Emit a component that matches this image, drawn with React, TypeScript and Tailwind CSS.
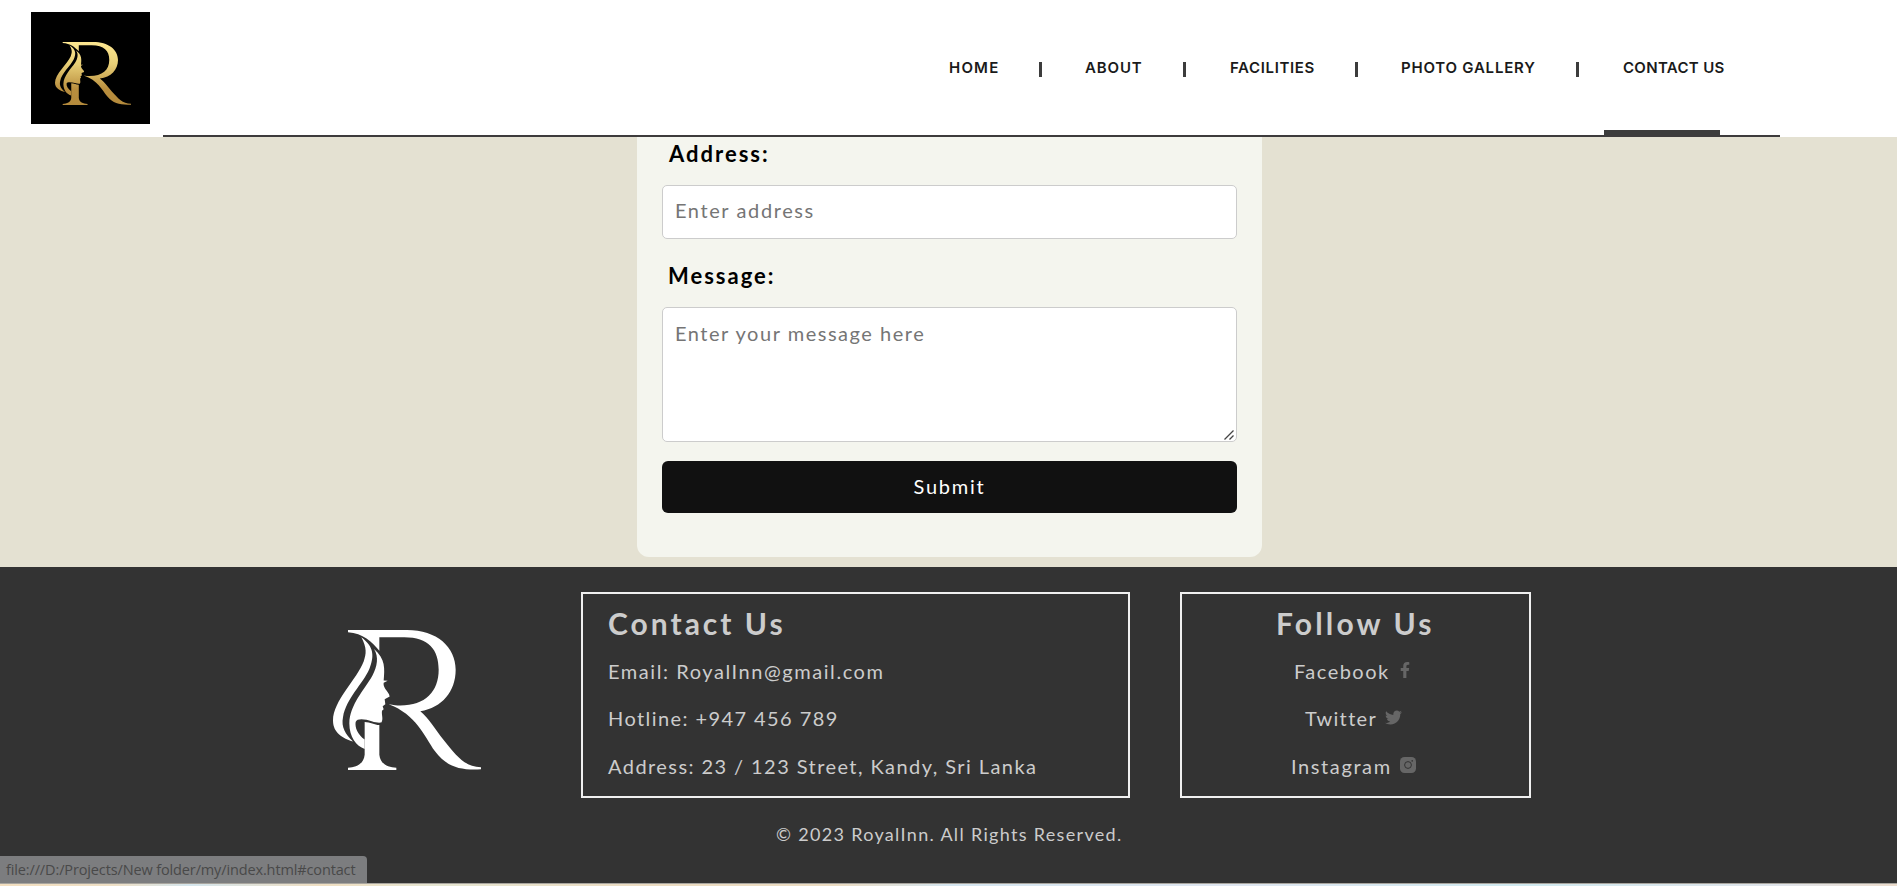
import { FaFacebookF, FaTwitter } from "react-icons/fa";

const MARK_PATHS = [
  "M143 121H320C410 121 466 172 466 240C466 305 425 354 360 364C385 384 402 415 430 450C468 497 492 530 542 532V538C480 541 440 532 404 484C372 438 348 374 265 343C280 345 290 347 300 347C375 347 415 305 415 240C415 180 385 143 312 143H237V183C215 158 188 130 143 128Z",
  "M193 396C210 396 222 405 237 405V494C240 522 262 532 288 533V540H143V533C168 532 190 522 193 494Z",
  "M183 143C200 175 198 192 190 215C170 268 98 332 98 392C98 430 128 445 158 455C135 432 122 412 128 382C138 325 186 285 207 238C222 200 222 172 183 143Z",
  "M221 178C236 202 231 230 216 258C192 300 148 345 147 400C147 442 168 468 193 477V449C172 434 163 412 166 396C170 384 196 388 214 394C226 398 234 399 243 398C250 388 243 376 245 363L250 358L247 349L255 343L253 328L268 320L266 313C258 300 248 292 250 279L262 273L250 272C253 238 256 207 221 178Z",
];

function Mark({ className, fill }: { className: string; fill: string }) {
  return (
    <svg className={className} viewBox="98 121 444 419" preserveAspectRatio="none" aria-hidden="true">
      <defs>
        <linearGradient id="gold" gradientUnits="userSpaceOnUse" x1="0" y1="121" x2="0" y2="540">
          <stop offset="0" stopColor="#fde791" />
          <stop offset="0.35" stopColor="#e8cf77" />
          <stop offset="0.75" stopColor="#b98e3e" />
          <stop offset="1" stopColor="#b48a3c" />
        </linearGradient>
      </defs>
      {MARK_PATHS.map((d) => (
        <path key={d} d={d} fill={fill} />
      ))}
    </svg>
  );
}

function InstagramSolid() {
  return (
    <svg className="size-4" viewBox="0 0 16 16" aria-hidden="true">
      <rect width="16" height="16" rx="4.5" fill="#666" />
      <circle cx="8" cy="8" r="3.4" fill="none" stroke="#333" strokeWidth="1" />
      <circle cx="12.2" cy="3.9" r="0.8" fill="#333" />
    </svg>
  );
}

const navItems = [
  { label: "HOME", className: "w-[90px] tracking-[1.2px]" },
  { label: "ABOUT", className: "ml-[43px] w-[98px] tracking-[0.85px]" },
  { label: "FACILITIES", className: "ml-[44px] w-[125px] tracking-[0.65px]" },
  { label: "PHOTO GALLERY", className: "ml-[43px] w-[175px] tracking-[0.78px]" },
  { label: "CONTACT US", className: "ml-[44px] tracking-[0.32px]" },
];

function Header() {
  return (
    <header className="flex h-[137px] bg-white">
      <div className="mt-3 ml-[31px] h-[112px] w-[119px] bg-black pt-[30px] pl-6">
        <Mark className="h-[63px] w-[76px]" fill="url(#gold)" />
      </div>
      <div className="ml-[13px] flex h-[137px] w-[1617px] flex-col border-b-2 border-[#3d3b3c]">
        <nav className="flex h-[130px] items-start pt-[62px] pl-[786px] font-['Inter',sans-serif] text-[15px] leading-[11px] font-semibold text-[#1a1a1a]">
          {navItems.map((item, i) => (
            <div key={item.label} className="flex">
              <a href="#contact" className={`block whitespace-nowrap ${item.className}`}>
                {item.label}
              </a>
              {i < navItems.length - 1 && <span className="h-[15px] w-[3px] bg-[#3c3c3c]" />}
            </div>
          ))}
        </nav>
        <div className="ml-[1441px] h-[5px] w-[116px] bg-[#3c3c3c]" />
      </div>
    </header>
  );
}

function ContactForm() {
  const field =
    "block w-full border border-[#ccc] bg-white px-[12px] text-[20px] leading-6 outline-none placeholder:text-[#757575] placeholder:opacity-100";
  return (
    <form className="ml-[637px] h-[420px] w-[625px] rounded-b-xl bg-[#f4f5ee] px-[25px]">
      <label className="block h-[32px] pl-[7px] text-[22px] leading-[33px] font-bold tracking-[2px] text-black">
        Address:
      </label>
      <input
        type="text"
        placeholder="Enter address"
        className={`${field} mt-4 h-[54px] rounded-[5px] pb-[5px] tracking-[1.6px]`}
      />
      <label className="mt-5 block h-[32px] pl-[6px] text-[22px] leading-[33px] font-bold tracking-[2px] text-black">
        Message:
      </label>
      <div className="relative mt-4">
        <textarea
          placeholder="Enter your message here"
          className={`${field} h-[135px] resize-none rounded-[5px] pt-[13px] tracking-[1.52px]`}
        />
        <svg className="absolute right-[3px] bottom-[2px] size-[10px]" viewBox="0 0 10 10" aria-hidden="true">
          <path d="M0.5 9.5L9.5 0.5M5.5 9.5L9.5 5.5" stroke="#444" strokeWidth="1.3" />
        </svg>
      </div>
      <button
        type="button"
        className="mt-[19px] block h-[52px] w-full rounded-md bg-[#111] pb-[2px] text-[20px] leading-[50px] tracking-[1.75px] text-white"
      >
        Submit
      </button>
    </form>
  );
}

function Footer() {
  return (
    <footer className="h-[316px] bg-[#333] pt-[25px] text-[20px] text-[#ccc]">
      <div className="flex h-[206px]">
        <Mark className="mt-[38px] ml-[332.5px] h-[140px] w-[148px]" fill="#fff" />
        <section className="ml-[100.5px] w-[549px] border-2 border-[#f0f0f0] pt-[11px] pl-[25px]">
          <h2 className="mb-[7px] h-9 text-[30px] leading-9 font-bold tracking-[3px]">Contact Us</h2>
          <p className="h-[47px] leading-[46px] tracking-[1.56px]">Email: RoyalInn@gmail.com</p>
          <p className="h-[48px] leading-[47px] tracking-[1.42px]">Hotline: +947 456 789</p>
          <p className="h-[47px] leading-[47px] tracking-[1.43px]">Address: 23 / 123 Street, Kandy, Sri Lanka</p>
        </section>
        <section className="ml-[50px] w-[351px] border-2 border-[#f0f0f0] pt-[11px]">
          <h2 className="mb-[7px] h-9 pl-[94px] text-[30px] leading-9 font-bold tracking-[3.15px]">Follow Us</h2>
          <div className="flex h-[47px] pl-[112px] leading-[46px]">
            <span className="w-[106px] tracking-[1.48px]">Facebook</span>
            <FaFacebookF className="mt-[14px] h-4 w-[10px] text-[#666]" />
          </div>
          <div className="flex h-[48px] pl-[123px] leading-[47px]">
            <span className="w-[80px] tracking-[1.35px]">Twitter</span>
            <FaTwitter className="mt-[14px] size-[17px] text-[#666]" />
          </div>
          <div className="flex h-[47px] pl-[109px] leading-[47px]">
            <span className="w-[109px] tracking-[1.6px]">Instagram</span>
            <div className="mt-[14px]">
              <InstagramSolid />
            </div>
          </div>
        </section>
      </div>
      <p className="mt-6 pl-[776px] text-[18px] leading-6 tracking-[1.32px]">© 2023 RoyalInn. All Rights Reserved.</p>
    </footer>
  );
}

export default function App() {
  return (
    <div className="relative h-[886px] w-[1897px] overflow-hidden bg-[#e4e1d2] font-['Lato',sans-serif]">
      <Header />
      <main className="h-[430px]">
        <ContactForm />
      </main>
      <Footer />
      <div className="h-[3px] border-t border-[#a9a69f] bg-[linear-gradient(to_right,#f3dfc0_0%,#efe0c6_6%,#d5e6ee_10%,#f0dfc2_17%,#e6e6d2_23%,#ecdcc2_34%,#ecdcc2_44%,#d5e6f0_50%,#dfe6f0_65%,#d0eaf0_80%,#e0e4ea_94%,#ecdccc_100%)]" />
      <div className="absolute bottom-[3px] left-0 h-[27px] w-[367px] rounded-tr bg-[#7c7d7f] pl-[6px] font-['Open_Sans',sans-serif] text-[14.5px] leading-[27px] tracking-[-0.13px] whitespace-nowrap text-[#494949]">
        file:///D:/Projects/New folder/my/index.html#contact
      </div>
    </div>
  );
}
